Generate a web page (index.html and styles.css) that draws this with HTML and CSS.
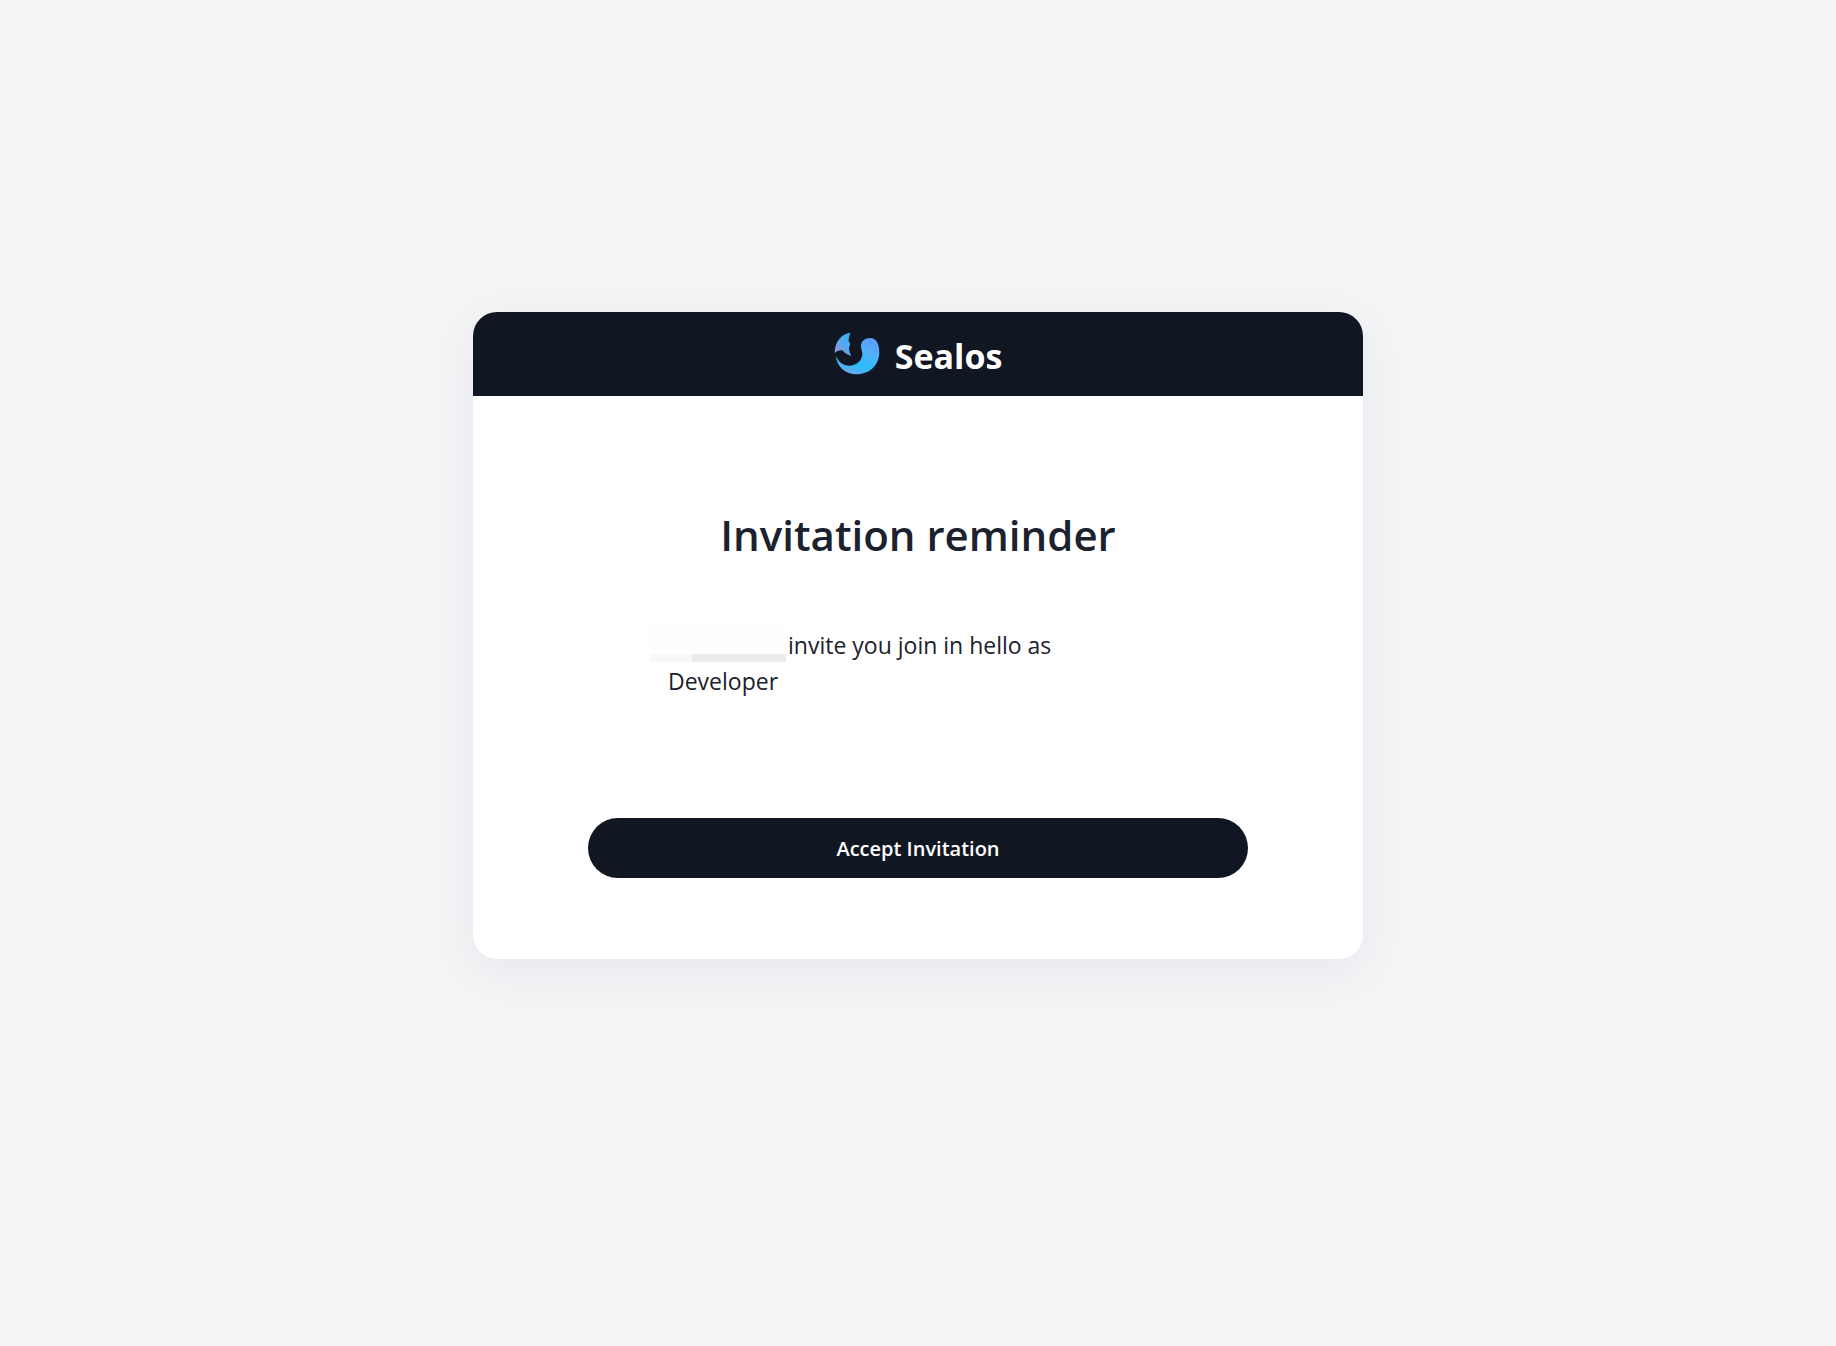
FILE: index.html
```html
<!DOCTYPE html>
<html lang="en">
<head>
<meta charset="utf-8">
<meta name="viewport" content="width=device-width, initial-scale=1">
<title>Sealos - Invitation reminder</title>
<link rel="stylesheet" href="styles.css">
</head>
<body>
<main class="card">
  <header class="brand">
    <svg class="brand-logo" viewBox="42 35 138 129" aria-hidden="true">
      <defs>
        <linearGradient id="body" x1="0.8" y1="0" x2="0.3" y2="1">
          <stop offset="0" stop-color="#5b9cf8"/>
          <stop offset="0.35" stop-color="#4fb0fc"/>
          <stop offset="0.7" stop-color="#2bbcfb"/>
          <stop offset="1" stop-color="#6da6ec"/>
        </linearGradient>
        <linearGradient id="tail" x1="1" y1="0" x2="0.1" y2="0.8">
          <stop offset="0" stop-color="#22bdfb"/>
          <stop offset="0.5" stop-color="#4fa9f2"/>
          <stop offset="1" stop-color="#8f96dc"/>
        </linearGradient>
      </defs>
      <path fill="url(#tail)" d="M92 37C64 41 45 62 44 98C50 92 59 89 67 90C74 99 83 104 94 106C89 98 87 89 87 80C93 74 90 68 86 63C86 53 88 45 92 37Z"/>
      <path fill="url(#body)" d="M47 106C56 126 72 137 90 136C111 135 126 120 127 102C127 92 123 87 123 78C123 62 135 53 150 53C169 53 178 70 178 96C178 134 149 162 110 162C76 162 51 139 47 106Z"/>
    </svg>
    <span class="brand-name">Sealos</span>
  </header>
  <section class="content">
    <h1 class="title">Invitation reminder</h1>
    <p class="message"><span class="sender"></span>invite you join in hello as<br>Developer</p>
    <button class="accept" type="button">Accept Invitation</button>
  </section>
</main>
</body>
</html>
```

FILE: styles.css
```css
* {
  box-sizing: border-box;
}

body {
  margin: 0;
  min-height: 100vh;
  padding: 312px 24px 48px;
  background: #f2f4f6;
  color: #1b222d;
  font-family: "Open Sans", "Noto Sans", sans-serif;
}

.card {
  max-width: 890px;
  margin: 0 auto;
  border-radius: 24px;
  background: #fff;
  box-shadow: 0 12px 48px rgba(20, 25, 50, 0.05);
}

.brand {
  display: flex;
  align-items: flex-start;
  justify-content: center;
  gap: 15px;
  height: 84px;
  padding-top: 20px;
  border-radius: 24px 24px 0 0;
  background: #111722;
}

.brand-logo {
  width: 46px;
  height: 43px;
}

.brand-name {
  color: #fff;
  font-size: 34px;
  font-weight: 700;
  line-height: 48px;
}

.content {
  display: flex;
  flex-direction: column;
  align-items: center;
  padding: 107px 24px 81px;
}

.title {
  margin: 0 0 60px;
  font-size: 42px;
  font-weight: 600;
  line-height: 64px;
}

.message {
  width: 100%;
  max-width: 500px;
  margin: 0 0 119px;
  font-size: 23px;
  line-height: 36px;
}

.sender {
  display: inline-block;
  width: 136px;
  height: 40px;
  margin: -20px 2px -8px -18px;
  vertical-align: baseline;
  background:
    linear-gradient(90deg, #f8f8f8 42px, #ebebec 42px) bottom / 100% 8px no-repeat,
    #fefefe;
}

.accept {
  width: 100%;
  max-width: 660px;
  height: 60px;
  border: 0;
  border-radius: 30px;
  background: #111722;
  color: #fff;
  font: inherit;
  font-size: 20px;
  font-weight: 600;
}
```
